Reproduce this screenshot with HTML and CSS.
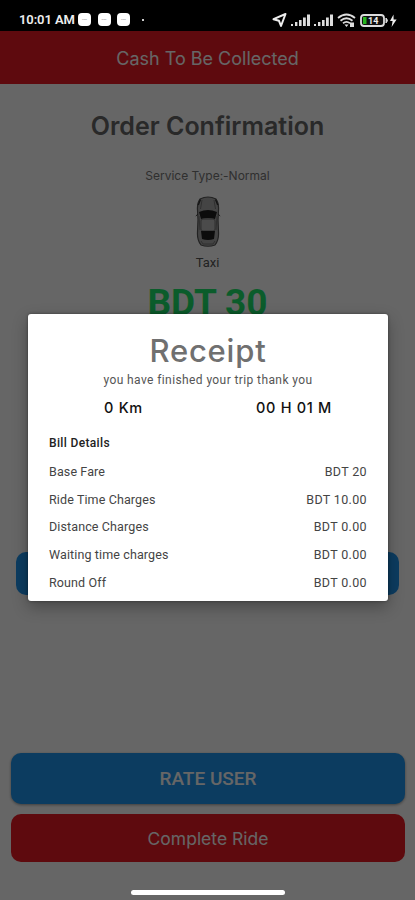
FILE: index.html
```html
<!DOCTYPE html>
<html lang="en">
<head>
  <meta charset="UTF-8">
  <meta name="viewport" content="width=device-width, initial-scale=1">
  <title>Order Confirmation</title>
  <link rel="stylesheet" href="styles.css">
</head>
<body>

<div class="phone">
  <div class="status-bar">
    <span class="clock">10:01 AM</span>
    <span class="note">---</span>
    <span class="note">---</span>
    <span class="note">---</span>
    <span class="dot"></span>
    <svg class="status-icons" width="128" height="18" viewBox="0 0 128 18">
      <!-- location -->
      <path d="M1.500 8.200 13.500 3 9 15 7 9.800z" fill="none" stroke="#eee" stroke-width="2" stroke-linejoin="round"/>
      <!-- signal -->
      <g fill="#ddd">
        <path d="M19 13h2v2h-2zM23 11h2.400v4H23zM27 9h2.600v6H27zM31 6.500h2.800V15H31zM35 3.500h3V15h-3z"/>
        <path d="M42 13h2v2h-2zM46 11h2.400v4H46zM50 9h2.600v6H50zM54 6.500h2.800V15H54zM58 3.500h3V15h-3z"/>
      </g>
      <!-- wifi -->
      <g fill="none" stroke="#ddd" stroke-width="1.800">
        <path d="M66 7q8.500-7 17 0M68.500 9.800q6-5 12 0M71 12.300q3.500-2.800 7 0"/>
      </g>
      <path d="M72.500 13.500h4l-2 2.500zM78 11.500h4V16h-4z" fill="#ddd"/>
      <!-- battery -->
      <rect x="89" y="4" width="23" height="11" rx="3" fill="#111" stroke="#ddd" stroke-width="1.800"/>
      <path d="M114 7q3 2.500 0 5z" fill="#ddd" stroke="#ddd"/>
      <path d="M91 6h3.500v7H91z" fill="#26b51e"/>
      <text x="96" y="13" class="battery-level">14</text>
      <path d="M121.500 3.500 118 10h2.600l-1 6 5-7.500h-3z" fill="#eee"/>
    </svg>
  </div>

  <div class="app">
    <div class="toolbar">Cash To Be Collected</div>
    <h1 class="title">Order Confirmation</h1>
    <div class="service">Service Type:-Normal</div>
    <svg class="car" width="26" height="52" viewBox="0 0 26 52">
      <path d="M5 3Q13-1 21 3q3 4 2.500 11l-.5 10 .5 12q.5 8-3.500 13-7 2.500-14 0Q2 44 2.500 36L3 24l-.5-10Q2 7 5 3z" fill="#ababab" stroke="#555" stroke-width="1.200"/>
      <path d="M7 4 5.500 13M19 4l1.500 9M4 20l1 14M22 20l-1 14M6 45l2 3h10l2-3" fill="none" stroke="#777"/>
      <path d="M2.500 9 5 3l1 1-2 5zM23.500 9 21 3l-1 1 2 5z" fill="#333"/>
      <path d="M4 16q9-4 18 0l-2 7q-7-2-14 0z" fill="#202020"/>
      <rect x="6" y="23" width="14" height="12" rx="2" fill="#bbb" stroke="#777"/>
      <path d="M6 35h14l-1 8q-6 2-12 0z" fill="#202020"/>
      <path d="M3 18 .8 20M23 18l2.200 2" stroke="#444"/>
    </svg>
    <div class="vehicle">Taxi</div>
    <div class="amount">BDT 30</div>
    <div class="hidden-btn"></div>
    <div class="actions">
      <button class="btn btn-rate">RATE USER</button>
      <button class="btn btn-complete">Complete Ride</button>
    </div>
  </div>

  <div class="scrim"></div>

  <div class="receipt">
    <h2 class="receipt-title">Receipt</h2>
    <p class="thanks">you have finished your trip thank you</p>
    <div class="trip">
      <span class="km">0 Km</span>
      <span class="time">00 H 01 M</span>
    </div>
    <div class="bill-title">Bill Details</div>
    <div class="row"><span>Base Fare</span><span>BDT 20</span></div>
    <div class="row"><span>Ride Time Charges</span><span>BDT 10.00</span></div>
    <div class="row"><span>Distance Charges</span><span>BDT 0.00</span></div>
    <div class="row"><span>Waiting time charges</span><span>BDT 0.00</span></div>
    <div class="row"><span>Round Off</span><span>BDT 0.00</span></div>
  </div>

  <div class="home-bar"></div>
</div>

</body>
</html>
```

FILE: styles.css
```css
* {
  box-sizing: border-box;
}
body {
  margin: 0;
  background: #666;
  font-family: Roboto, "Liberation Sans", sans-serif;
}
.phone {
  position: relative;
  width: 415px;
  height: 900px;
  overflow: hidden;
  display: flex;
  flex-direction: column;
}
.status-bar {
  height: 31px;
  padding: 8px 15px 0 19px;
  background: #000;
  color: #eee;
  display: flex;
  align-items: center;
  flex-shrink: 0;
}
.clock {
  width: 59px;
  font-size: 13px;
  font-weight: 600;
  letter-spacing: -.1px;
  white-space: nowrap;
}
.note {
  width: 13px;
  height: 13px;
  margin-right: 6.5px;
  border-radius: 4px;
  background: #fff;
  color: #777;
  font-size: 6px;
  line-height: 12px;
  text-align: center;
}
.dot {
  width: 2px;
  height: 2px;
  margin-left: 5px;
  background: #ccc;
}
.status-icons {
  margin-left: auto;
}
.battery-level {
  font: bold 9px Roboto, sans-serif;
  fill: #eee;
}
.app {
  flex: 1;
  display: flex;
  flex-direction: column;
  align-items: center;
  background: #fff;
}
.toolbar {
  width: 100%;
  height: 53px;
  background: #eb1923;
  color: #fff;
  font: 400 18px/55px Inter, sans-serif;
  text-align: center;
}
.title {
  margin: 26px 0 0;
  color: #666;
  font: 600 25px/32px Inter, sans-serif;
}
.service {
  margin-top: 25px;
  color: #777;
  font: 400 12px/18px Inter, sans-serif;
}
.car {
  margin-top: 11px;
}
.vehicle {
  margin-top: 6px;
  color: #555;
  font-size: 13px;
  line-height: 18px;
}
.amount {
  margin-top: 9px;
  color: #1de66b;
  font-size: 37px;
  font-weight: 700;
  line-height: 44px;
}
.hidden-btn {
  width: 383px;
  height: 43px;
  margin-top: 227px;
  border-radius: 10px;
  background: #1e96f0;
}
.actions {
  width: 100%;
  margin-top: 158px;
  padding: 0 10px 0 11px;
  display: flex;
  flex-direction: column;
  gap: 10px;
}
.btn {
  border: 0;
  border-radius: 10px;
  color: #fff;
}
.btn-rate {
  height: 51px;
  background: #1e96f0;
  box-shadow: 0 1px 3px rgba(0, 0, 0, .4);
  font: 500 19px Roboto, sans-serif;
}
.btn-complete {
  height: 48px;
  background: #eb1923;
  font: 400 17.5px Inter, sans-serif;
}
.scrim {
  position: absolute;
  inset: 31px 0 0;
  background: rgba(0, 0, 0, .6);
}
.receipt {
  position: absolute;
  top: 314px;
  left: 28px;
  width: 360px;
  height: 287px;
  padding: 18px 21px 0;
  border-radius: 3px;
  background: #fff;
  box-shadow: 0 6px 16px rgba(0, 0, 0, .3), 0 0 3px rgba(0, 0, 0, .4);
  color: #444;
}
.receipt-title {
  margin: 0;
  color: #707070;
  font: 500 31px/38px Inter, sans-serif;
  letter-spacing: .8px;
  text-align: center;
}
.thanks {
  margin: 1px 0 0;
  color: #555;
  font-size: 12px;
  line-height: 18px;
  letter-spacing: .4px;
  text-align: center;
}
.trip {
  margin-top: 9px;
  display: flex;
  justify-content: space-between;
  padding: 0 35px 0 55px;
  color: #111;
  font: 500 14.5px/20px Inter, sans-serif;
  letter-spacing: .7px;
}
.bill-title {
  margin-top: 16px;
  color: #222;
  font-size: 12px;
  font-weight: 500;
  line-height: 18px;
  letter-spacing: .35px;
}
.row {
  height: 27.7px;
  display: flex;
  justify-content: space-between;
  font-size: 12.5px;
  line-height: 39px;
  letter-spacing: .12px;
}
.row span:last-child {
  letter-spacing: .35px;
}
.home-bar {
  position: absolute;
  left: 131px;
  bottom: 5px;
  width: 154px;
  height: 5px;
  border-radius: 3px;
  background: #fff;
}
```
